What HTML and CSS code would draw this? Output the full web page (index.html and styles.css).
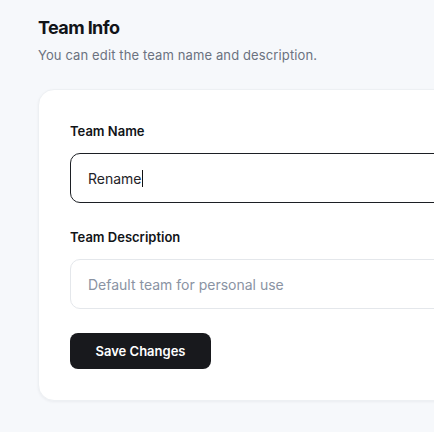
FILE: index.html
```html
<!DOCTYPE html>
<html lang="en">
<head>
<meta charset="utf-8">
<title>Team Info</title>
<link rel="stylesheet" href="styles.css">
</head>
<body>
<main class="page">
  <header class="head">
    <h1 class="title">Team Info</h1>
    <p class="subtitle">You can edit the team name and description.</p>
  </header>
  <section class="card">
    <div class="field">
      <label class="label">Team Name</label>
      <div class="input input-focus"><span class="value">Rename</span><span class="caret"></span></div>
    </div>
    <div class="field">
      <label class="label">Team Description</label>
      <div class="input"><span class="placeholder">Default team for personal use</span></div>
    </div>
    <button class="btn" type="button">Save Changes</button>
  </section>
</main>
</body>
</html>
```

FILE: styles.css
```css
* { box-sizing: border-box; }
html, body { margin: 0; padding: 0; }
body {
  background: #f6f8fb;
  font-family: Inter, "Noto Sans", "Liberation Sans", sans-serif;
  color: #111827;
  overflow: hidden;
  width: 434px;
  height: 432px;
}
.page {
  width: 760px;
  padding: 14px 0 0 38px;
}
.title {
  margin: 0;
  font-size: 18px;
  line-height: 28px;
  font-weight: 700;
  letter-spacing: -0.6px;
  color: #111418;
}
.subtitle {
  margin: 3px 0 0;
  font-size: 13px;
  line-height: 20px;
  letter-spacing: 0.12px;
  color: #6b7280;
}
.card {
  margin-top: 24px;
  background: #ffffff;
  border: 1px solid #edf0f3;
  border-radius: 16px;
  box-shadow: 0 1px 3px rgba(16, 24, 40, 0.05);
  padding: 31px 31px 31px;
  display: flex;
  flex-direction: column;
  align-items: flex-start;
  gap: 24px;
}
.field {
  display: flex;
  flex-direction: column;
  gap: 12px;
  width: 100%;
}
.label {
  font-size: 13px;
  line-height: 20px;
  font-weight: 600;
  color: #111418;
}
.input {
  height: 50px;
  border: 1px solid #e4e7eb;
  border-radius: 10px;
  padding: 0 17px;
  display: flex;
  align-items: center;
  font-size: 14px;
  background: #fff;
}
.input-focus { border-color: #1c1f24; }
.value { color: #1f2328; }
.caret {
  display: inline-block;
  width: 1px;
  height: 17px;
  background: #111;
}
.placeholder { color: #8a93a3; }
.btn {
  height: 36px;
  width: 141px;
  border: 0;
  border-radius: 8px;
  background: #18191d;
  color: #ffffff;
  font-family: inherit;
  font-size: 13px;
  font-weight: 600;
}
```
